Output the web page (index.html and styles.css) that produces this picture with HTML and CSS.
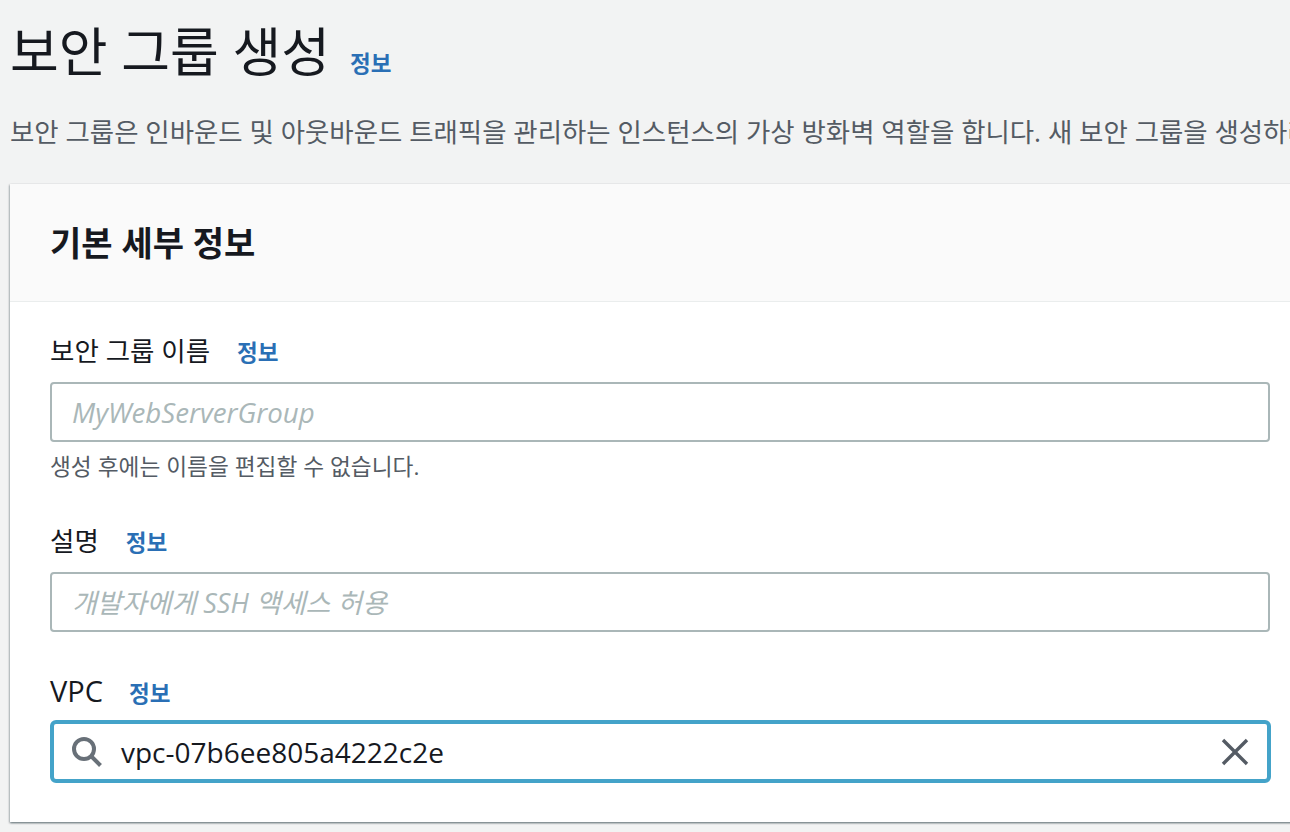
FILE: index.html
```html
<!doctype html>
<html lang="ko">
    <head>
        <meta charset="UTF-8" />
        <title>보안 그룹 생성</title>
        <link rel="stylesheet" href="styles.css">
    </head>
    <body>
        <div class="page">
            <div class="page-title">
                <h1>보안 그룹 생성</h1>
                <a class="info-link" href="#">정보</a>
            </div>
            <p class="page-desc">보안 그룹은 인바운드 및 아웃바운드 트래픽을 관리하는 인스턴스의 가상 방화벽 역할을 합니다. 새 보안 그룹을 생성하려면 아래 필드를 작성하십시오.</p>

            <div class="card">
                <div class="card-header">
                    <h2>기본 세부 정보</h2>
                </div>
                <div class="card-body">
                    <div class="field field-name">
                        <div class="field-label">
                            <label>보안 그룹 이름</label>
                            <a class="info-link" href="#">정보</a>
                        </div>
                        <input class="text-input" type="text" placeholder="MyWebServerGroup">
                        <div class="field-hint">생성 후에는 이름을 편집할 수 없습니다.</div>
                    </div>

                    <div class="field field-desc">
                        <div class="field-label">
                            <label>설명</label>
                            <a class="info-link" href="#">정보</a>
                        </div>
                        <input class="text-input" type="text" placeholder="개발자에게 SSH 액세스 허용">
                    </div>

                    <div class="field field-vpc">
                        <div class="field-label">
                            <label>VPC</label>
                            <a class="info-link" href="#">정보</a>
                        </div>
                        <div class="search-input">
                            <svg class="icon-search" width="32" height="32" viewBox="0 0 32 32" fill="none">
                                <circle cx="13" cy="13" r="10" stroke="#687078" stroke-width="4" />
                                <path d="M20.5 20.5l9 9" stroke="#687078" stroke-width="4" />
                            </svg>
                            <span class="search-value">vpc-07b6ee805a4222c2e</span>
                            <svg class="icon-clear" width="28" height="28" viewBox="0 0 28 28" fill="none">
                                <path d="M2 2l24 24M26 2L2 26" stroke="#545b64" stroke-width="3.4" />
                            </svg>
                        </div>
                    </div>
                </div>
            </div>
        </div>
    </body>
</html>
```

FILE: styles.css
```css
html,
body {
    margin: 0;
    height: 832px;
    overflow: hidden;
}

body {
    font-family: 'Open Sans', 'Noto Sans CJK KR', sans-serif;
    background: #f2f3f3;
    color: #16191f;
}

.page {
    width: 1320px;
    padding: 21px 0 0 10px;
    box-sizing: border-box;
}

.page-title {
    display: flex;
    align-items: baseline;
    gap: 20px;
    height: 64px;
}

h1 {
    margin: 0;
    font-size: 53px;
    font-weight: 400;
    line-height: 62px;
}

.info-link {
    color: #2a6fb5;
    font-size: 22.5px;
    font-weight: 700;
    text-decoration: none;
}

.page-desc {
    margin: 29px 0 0;
    font-size: 26.45px;
    line-height: 36px;
    color: #545b64;
    white-space: nowrap;
}

.card {
    margin-top: 34px;
    background: white;
    box-shadow: 0 1px 2px 0 rgba(0, 28, 36, 0.45), 1px 1px 2px 0 rgba(0, 28, 36, 0.15), -1px 1px 2px 0 rgba(0, 28, 36, 0.15);
}

.card-header {
    height: 118px;
    box-sizing: border-box;
    padding: 0 40px 3px;
    display: flex;
    align-items: center;
    background: #fafafa;
    border-bottom: 1px solid #eaeded;
}

h2 {
    margin: 0;
    font-size: 34px;
    font-weight: 700;
}

.card-body {
    padding: 29px 40px 39px;
}

.field-label {
    display: flex;
    align-items: baseline;
    gap: 27px;
    height: 51px;
    font-size: 26.5px;
    line-height: 40px;
}

.field-desc {
    margin-top: 38px;
}

.field-vpc {
    margin-top: 39px;
}

.field-vpc .field-label {
    height: 49px;
    gap: 26px;
}

.field-vpc label {
    font-size: 29px;
}

.text-input {
    display: block;
    width: 1220px;
    height: 60px;
    box-sizing: border-box;
    padding: 0 20px;
    border: 2px solid #aab7b8;
    border-radius: 4px;
    background: white;
    font-family: inherit;
    font-size: 27.7px;
    outline: none;
}

.field-desc .text-input {
    font-size: 27px;
}

.text-input::placeholder {
    color: #aab7b8;
    font-style: italic;
    opacity: 1;
}

.field-hint {
    margin-top: 9px;
    font-size: 22.7px;
    line-height: 32px;
    color: #545b64;
}

.search-input {
    display: flex;
    align-items: center;
    width: 1221px;
    height: 63px;
    box-sizing: border-box;
    padding: 0 18px 0 17px;
    border: 4px solid #44a3c9;
    border-radius: 6px;
    background: white;
}

.search-value {
    flex: 1;
    margin-left: 18px;
    font-size: 28px;
}
```
